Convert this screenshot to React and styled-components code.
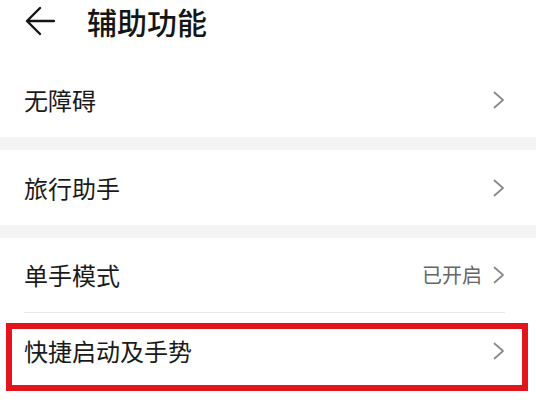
import React from "react";
import styled, { createGlobalStyle } from "styled-components";

const GlobalStyle = createGlobalStyle`
  html, body {
    margin: 0;
    padding: 0;
    background: #ffffff;
  }
  body {
    font-family: "Noto Sans CJK SC", "Noto Sans", sans-serif;
    color: #1a1a1a;
  }
`;

const items = [
  [{ label: "无障碍" }],
  [{ label: "旅行助手" }],
  [
    { label: "单手模式", value: "已开启", divider: true },
    { label: "快捷启动及手势", highlighted: true },
  ],
];

const BackArrow = () => (
  <svg width="30" height="30" viewBox="0 0 30 30" fill="none">
    <path
      d="M29 15H2.5M15 2L2 15L15 28"
      stroke="#151515"
      strokeWidth="2.4"
      strokeLinecap="round"
      strokeLinejoin="round"
    />
  </svg>
);

const Chevron = () => (
  <svg width="12" height="18" viewBox="0 0 12 18" fill="none">
    <path
      d="M1.5 1.5L10 9L1.5 16.5"
      stroke="#8a8a8a"
      strokeWidth="1.8"
      strokeLinecap="round"
      strokeLinejoin="round"
    />
  </svg>
);

const App = () => {
  return (
    <Page>
      <GlobalStyle />
      <Header>
        <BackButton>
          <BackArrow />
        </BackButton>
        <Title>辅助功能</Title>
      </Header>
      {items.map((group, gi) => (
        <React.Fragment key={gi}>
          {gi > 0 && <Gap />}
          <Group>
            {group.map((item) => (
              <Row key={item.label} $highlighted={item.highlighted}>
                <RowInner $divider={item.divider}>
                  <Label>{item.label}</Label>
                  <Right>
                    {item.value && <Value>{item.value}</Value>}
                    <Chevron />
                  </Right>
                </RowInner>
              </Row>
            ))}
          </Group>
        </React.Fragment>
      ))}
    </Page>
  );
};

export default App;

const Page = styled.div`
  width: 536px;
  height: 400px;
  overflow: hidden;
  background: #ffffff;
`;

const Header = styled.div`
  display: flex;
  align-items: center;
  height: 42px;
  padding: 0 0 0 25px;
  margin-bottom: 20px;
`;

const BackButton = styled.div`
  display: flex;
  align-items: center;
  width: 30px;
  height: 30px;
  margin-right: 32px;
`;

const Title = styled.h1`
  margin: 0;
  font-size: 30px;
  font-weight: 500;
  line-height: 42px;
  color: #151515;
`;

const Gap = styled.div`
  height: 13px;
  background: #f4f4f4;
`;

const Group = styled.div`
  display: flex;
  flex-direction: column;
`;

const Row = styled.div`
  position: relative;
  padding: 0 31px 0 24px;

  &::after {
    content: "";
    display: ${(p) => (p.$highlighted ? "block" : "none")};
    position: absolute;
    left: 6px;
    right: 8px;
    top: 10px;
    height: 68px;
    box-sizing: border-box;
    border: 6px solid #e2141c;
    pointer-events: none;
  }
`;

const RowInner = styled.div`
  display: flex;
  align-items: center;
  justify-content: space-between;
  height: 75px;
  box-sizing: border-box;
  border-bottom: ${(p) => (p.$divider ? "1px solid #e6e6e6" : "none")};
`;

const Label = styled.span`
  font-size: 24px;
  line-height: 1;
  color: #1a1a1a;
`;

const Right = styled.div`
  display: flex;
  align-items: center;
  gap: 11px;
`;

const Value = styled.span`
  font-size: 20px;
  line-height: 1;
  color: #666666;
`;
